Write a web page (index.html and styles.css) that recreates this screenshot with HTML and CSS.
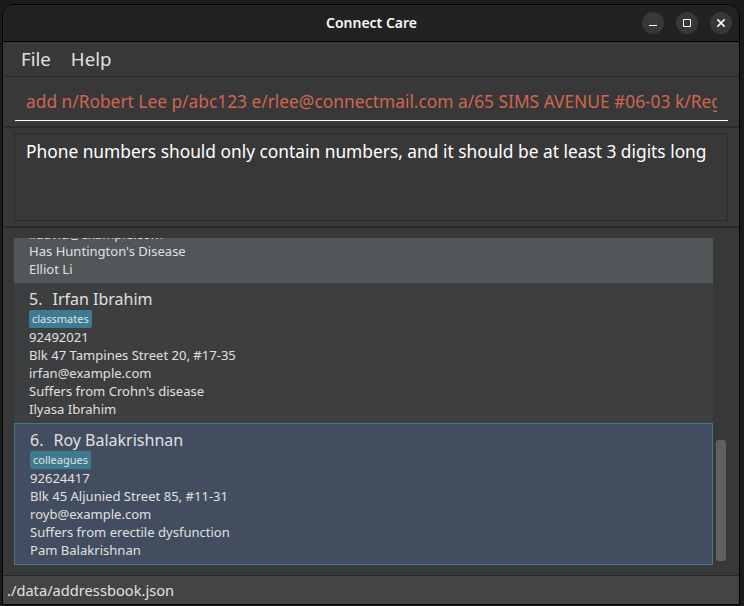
FILE: index.html
```
<!DOCTYPE html>
<html lang="en">
<head>
<meta charset="utf-8">
<title>Connect Care</title>
<link rel="stylesheet" href="styles.css">
</head>
<body>
<div class="window">
  <header class="titlebar">
    <span></span>
    <h1>Connect Care</h1>
    <div class="controls">
      <button aria-label="Minimize"><svg viewBox="0 0 22 22"><path d="M7 13.5h8"/></svg></button>
      <button aria-label="Maximize"><svg viewBox="0 0 22 22"><path d="M7.5 7.5h7v7h-7z"/></svg></button>
      <button aria-label="Close"><svg viewBox="0 0 22 22"><path class="cross" d="M7.4 7.4l7.2 7.2M14.6 7.4l-7.2 7.2"/></svg></button>
    </div>
  </header>
  <nav class="menu"><span>File</span><span>Help</span></nav>
  <section class="command"><div class="field"><span class="command-text">add n/Robert Lee p/abc123 e/rlee@connectmail.com a/65 SIMS AVENUE #06-03 k/Reg</span></div></section>
  <section class="result"><div class="message"><span class="message-text">Phone numbers should only contain numbers, and it should be at least 3 digits long</span></div></section>
  <main class="people">
    <div class="list">
      <article class="card even">
        <p class="email">lidavid@example.com</p><p>Has Huntington's Disease</p><p>Elliot Li</p>
      </article>
      <article class="card">
        <h2><span>5.</span>Irfan Ibrahim</h2>
        <div class="tags"><span>classmates</span></div>
        <p>92492021</p><p>Blk 47 Tampines Street 20, #17-35</p><p>irfan@example.com</p><p>Suffers from Crohn's disease</p><p>Ilyasa Ibrahim</p>
      </article>
      <article class="card selected">
        <h2><span>6.</span>Roy Balakrishnan</h2>
        <div class="tags"><span>colleagues</span></div>
        <p>92624417</p><p>Blk 45 Aljunied Street 85, #11-31</p><p>royb@example.com</p><p>Suffers from erectile dysfunction</p><p>Pam Balakrishnan</p>
      </article>
    </div>
    <div class="scrollbar"><div class="thumb"></div></div>
  </main>
  <footer class="status">./data/addressbook.json</footer>
</div>
</body>
</html>
```
FILE: styles.css
```
* { box-sizing: border-box; margin: 0; padding: 0; }
body {
  width: 744px;
  height: 606px;
  padding: 4px 4px 1px 2px;
  overflow: hidden;
  background: #1b1b1b;
  font-family: "Noto Sans", sans-serif;
  color: #e0e0e0;
}
.window {
  display: flex;
  flex-direction: column;
  height: 601px;
  border: 1px solid #000;
  border-radius: 12px 12px 0 0;
  background: #383838;
  overflow: hidden;
}
.titlebar {
  display: grid;
  grid-template-columns: 1fr auto 1fr;
  align-items: center;
  height: 37px;
  padding-right: 7px;
  border-bottom: 1px solid #000;
  background: #222;
}
.titlebar h1 {
  margin-left: 8px;
  font: 600 14px/36px "Noto Sans", sans-serif;
  color: #f7f7f7;
}
.controls { display: flex; justify-content: flex-end; gap: 12px; }
.controls button {
  width: 22px;
  height: 22px;
  border: 0;
  border-radius: 50%;
  background: #383838;
}
.controls svg { display: block; width: 22px; height: 22px; fill: none; stroke: #fff; stroke-width: 1; }
.controls .cross { stroke-width: 1.5; }
.menu {
  display: flex;
  gap: 20px;
  height: 35px;
  padding-left: 18px;
  border-bottom: 1px solid #2a2a2a;
  font-size: 18.67px;
  line-height: 34px;
}
.command { height: 51px; padding: 6px 11px 5px 12px; border-bottom: 2px solid #2b2b2b; }
.field {
  height: 38px;
  padding: 0 11px;
  border-bottom: 1px solid #fff;
  color: #d06651;
  font-size: 17.33px;
  line-height: 37px;
}
.command-text { display: block; overflow: hidden; white-space: nowrap; }
.result { height: 100px; padding: 5px 11px 5px 11px; border-bottom: 2px solid #2b2b2b; }
.message {
  height: 88px;
  padding: 5px 11px;
  border: 1px solid #2b2b2b;
  color: #fff;
  font-size: 17.33px;
  line-height: 24px;
  white-space: nowrap;
}
.people {
  display: flex;
  height: 348px;
  padding: 10px 12px 10px 11px;
  border-bottom: 1px solid #262626;
}
.list {
  display: flex;
  flex-direction: column;
  justify-content: flex-end;
  width: 699px;
  height: 327px;
  overflow: hidden;
}
.card {
  flex: none;
  padding: 5px 15px;
  background: #3c3e3f;
  font-size: 13.05px;
  line-height: 18px;
}
.even { background: #515658; }
.email { height: 18px; line-height: 20px; }
.selected { border: 1px solid #3e7b91; background: #424d5f; }
.card h2 { display: flex; gap: 10px; font-size: 16px; font-weight: 400; line-height: 22px; }
.tags { display: flex; height: 18px; }
.tags span {
  padding: 0 3px;
  border-radius: 2px;
  background: #3e7b91;
  font-size: 11px;
  line-height: 18px;
}
.scrollbar { display: flex; flex-direction: column; justify-content: flex-end; width: 13px; padding: 0 0 4px 3px; }
.thumb { flex: none; width: 10px; height: 121px; border-radius: 3px; background: #606060; }
.status { flex: 1; padding-left: 4px; background: #444; font-size: 14.67px; line-height: 29px; }
```
